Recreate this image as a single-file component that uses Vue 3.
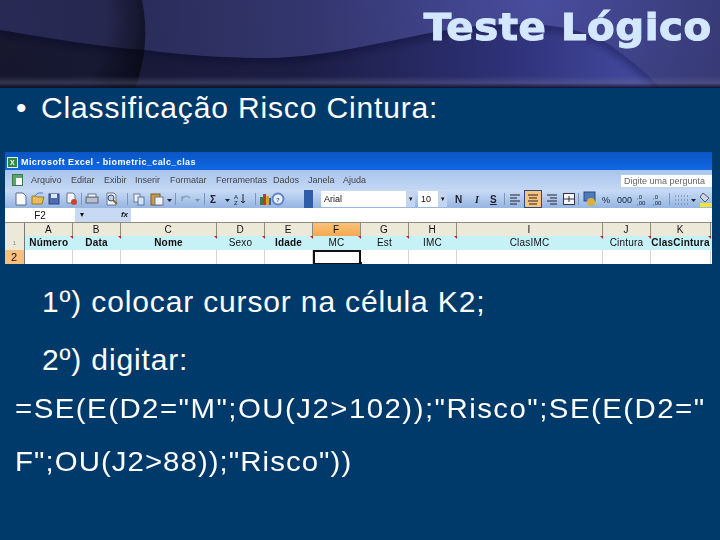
<script setup>
const menus = [['Arquivo',26],['Editar',66],['Exibir',99],['Inserir',130],['Formatar',165],['Ferramentas',211],['Dados',268],['Janela',303],['Ajuda',338]]
const columns = [
  { id: 'A', width: 47.5, label: 'Número' },
  { id: 'B', width: 48, label: 'Data' },
  { id: 'C', width: 96, label: 'Nome' },
  { id: 'D', width: 48, label: 'Sexo', light: true },
  { id: 'E', width: 48, label: 'Idade' },
  { id: 'F', width: 48, label: 'MC', active: true, light: true },
  { id: 'G', width: 48, label: 'Est', light: true },
  { id: 'H', width: 48, label: 'IMC', light: true },
  { id: 'I', width: 146, label: 'ClasIMC', light: true },
  { id: 'J', width: 48, label: 'Cintura', light: true },
  { id: 'K', width: 60, label: 'ClasCintura' }
]
const leftSeps = [76, 122, 170, 199, 250]
const rightSeps = [50, 124, 215]
</script>

<template>
  <div class="slide">
    <header class="banner">
      <svg class="banner-art" viewBox="0 0 720 88" preserveAspectRatio="none" aria-hidden="true">
        <defs>
          <radialGradient id="glow" cx="540" cy="0" r="440" gradientUnits="userSpaceOnUse">
            <stop offset="0" stop-color="#494d9e" />
            <stop offset="0.5" stop-color="#34376f" />
            <stop offset="1" stop-color="#282a55" />
          </radialGradient>
          <linearGradient id="lower" x1="0" y1="0" x2="720" y2="0" gradientUnits="userSpaceOnUse">
            <stop offset="0" stop-color="#17172f" />
            <stop offset="0.42" stop-color="#1b1d44" />
            <stop offset="0.7" stop-color="#2e3176" />
            <stop offset="0.88" stop-color="#42479c" />
          </linearGradient>
          <radialGradient id="ball" cx="0" cy="20" r="148" gradientUnits="userSpaceOnUse">
            <stop offset="0" stop-color="#000" stop-opacity="0" />
            <stop offset="0.72" stop-color="#000" stop-opacity="0.06" />
            <stop offset="1" stop-color="#05050c" stop-opacity="0.66" />
          </radialGradient>
          <linearGradient id="edge" x1="0" y1="0" x2="0" y2="1">
            <stop offset="0" stop-color="#777a98" stop-opacity="0" />
            <stop offset="0.55" stop-color="#777a98" stop-opacity="0.3" />
            <stop offset="0.8" stop-color="#20203a" stop-opacity="0.5" />
            <stop offset="1" stop-color="#0c0c1e" stop-opacity="0.9" />
          </linearGradient>
          <filter id="soft" x="-5%" y="-50%" width="110%" height="200%"><feGaussianBlur stdDeviation="4" /></filter>
          <clipPath id="lowerClip"><path d="M0 30 C60 40 110 48 145 50 C190 56 230 58 265 58 C340 58 420 30 480 26 C540 20 590 26 622 54 C640 68 652 78 662 90 L0 90 Z" /></clipPath>
        </defs>
        <rect width="720" height="88" fill="url(#glow)" />
        <path d="M0 30 C60 40 110 48 145 50 C190 56 230 58 265 58 C340 58 420 30 480 26 C540 20 590 26 622 54 C640 68 652 78 662 90 L0 90 Z" fill="url(#lower)" />
        <g clip-path="url(#lowerClip)">
          <path d="M0 30 C60 40 110 48 145 50 C190 56 230 58 265 58 C340 58 420 30 480 26 C540 20 590 26 622 54 C640 68 652 78 662 90" fill="none" stroke="#0c0c20" stroke-width="8" stroke-opacity="0.4" filter="url(#soft)" />
        </g>
        <path d="M0 0 H142 C148 28 146 60 135 88 H0 Z" fill="url(#ball)" />
        <rect y="76" width="720" height="12" fill="url(#edge)" />
      </svg>
      <h1 class="title">Teste Lógico</h1>
    </header>

    <main class="content">
      <p class="bullet"><span class="dot">•</span>Classificação Risco Cintura:</p>

      <section class="excel">
        <div class="titlebar">
          <span class="xl-logo">X</span>
          <span>Microsoft Excel - biometric_calc_clas</span>
        </div>
        <div class="menubar">
          <span class="xl-doc"></span>
          <span v-for="m in menus" :key="m[0]" class="menu" :style="{ left: m[1] + 'px' }">{{ m[0] }}</span>
          <span class="ask">Digite uma pergunta</span>
        </div>
        <div class="toolbar">
          <svg class="strip left" viewBox="0 0 299 18" aria-hidden="true">
            <g v-for="x in leftSeps" :key="x"><rect :x="x" y="3" width="1" height="12" fill="#7d95bb" /></g>
            <path d="M11 3h7l3 3v9H11z" fill="#fafcff" stroke="#5a6b8c" />
            <path d="M27 14V6h4l1 1h7l-2 7z" fill="#e9bd55" stroke="#9a7a2c" />
            <path d="M30 6l3-3h5" fill="none" stroke="#4d7fc4" />
            <rect x="44" y="4" width="10" height="10" fill="#4d6cae" stroke="#2e4378" />
            <rect x="46" y="4" width="6" height="4" fill="#dfe6f3" />
            <path d="M62 3h6l2 2v8H62z" fill="#f3f5fa" stroke="#6a7891" />
            <circle cx="69" cy="12" r="3" fill="#c8442e" />
            <rect x="81" y="7" width="12" height="6" fill="#b7bfcd" stroke="#5b6478" />
            <rect x="83" y="4" width="8" height="3" fill="#f3f5fa" stroke="#6a7891" />
            <path d="M102 3h7l2 2v10h-9z" fill="#f3f5fa" stroke="#6a7891" />
            <circle cx="106" cy="8" r="3" fill="#bcd0ea" stroke="#37496d" />
            <path d="M108 10l4 4" stroke="#8a6a2c" stroke-width="2" />
            <rect x="129" y="4" width="6" height="8" fill="#eef2f9" stroke="#6a7891" />
            <rect x="133" y="7" width="6" height="8" fill="#d7e3f3" stroke="#5776a8" />
            <rect x="146" y="4" width="9" height="11" fill="#c69a4a" stroke="#7c5e24" />
            <rect x="150" y="7" width="8" height="8" fill="#f2f4f9" stroke="#6a7891" />
            <path d="M162 9h5l-2.500 3z" fill="#223" />
            <path d="M177 11c0-5 5-6 8-3M177 11V6" fill="none" stroke="#8da0be" stroke-width="1.500" />
            <path d="M190 9h5l-2.500 3z" fill="#7d8ca6" />
            <text x="205" y="13" class="glyph bold">Σ</text>
            <path d="M220 9h5l-2.500 3z" fill="#223" />
            <text x="229" y="9" class="tiny">A</text><text x="229" y="15" class="tiny">Z</text>
            <path d="M238 4v9l-2-2M238 13l2-2" fill="none" stroke="#223" />
            <rect x="255" y="7" width="3" height="8" fill="#3f7a3c" />
            <rect x="258" y="4" width="3" height="11" fill="#c0392b" />
            <rect x="261" y="6" width="3" height="9" fill="#d6a32e" />
            <rect x="264" y="8" width="2" height="7" fill="#3b5fa8" />
            <circle cx="273" cy="9" r="5.500" fill="#eaf0f8" stroke="#5e86c9" stroke-width="2" />
            <text x="271" y="12" class="tiny bold blue">?</text>
          </svg>
          <span class="grip"></span>
          <div class="combos">
            <span class="combo font">Arial<em>▾</em></span>
            <span class="combo size">10<em>▾</em></span>
          </div>
          <svg class="strip right" viewBox="0 0 262 18" aria-hidden="true">
            <g v-for="x in rightSeps" :key="x"><rect :x="x + 4" y="3" width="1" height="12" fill="#7d95bb" /></g>
            <text x="5" y="13" class="glyph bold">N</text>
            <text x="25" y="13" class="glyph ital">I</text>
            <text x="40" y="13" class="glyph bold under">S</text>
            <path d="M60 5h10M60 8h7M60 11h10M60 14h7" stroke="#223" fill="none" />
            <rect x="74.500" y="0.500" width="17" height="17" fill="#fbc27a" stroke="#2a4a80" />
            <path d="M78 5h10M79 8h8M78 11h10M79 14h8" stroke="#223" fill="none" />
            <path d="M97 5h10M100 8h7M97 11h10M100 14h7" stroke="#223" fill="none" />
            <rect x="113.500" y="3.500" width="11" height="11" fill="#f6f8fc" stroke="#334" />
            <path d="M114 9h10M119 6v6" stroke="#334" />
            <rect x="134" y="2" width="11" height="9" fill="#4d7bb8" stroke="#2a4a80" />
            <circle cx="141" cy="12" r="4" fill="#d9b23e" />
            <text x="152" y="13" class="tiny big">%</text>
            <text x="167" y="13" class="tiny big">000</text>
            <text x="187" y="9" class="tiny">,0</text><text x="187" y="15" class="tiny">,00</text>
            <text x="203" y="9" class="tiny">,0</text><text x="203" y="15" class="tiny">,00</text>
            <path d="M225 6h14M225 10h14M225 14h14" stroke="#61708c" stroke-dasharray="1 2" fill="none" />
            <path d="M241 9h5l-2.500 3z" fill="#223" />
            <path d="M253 3l6 5-4 4-5-5z" fill="#cfd6e2" stroke="#4f5b70" />
            <rect x="250" y="13" width="12" height="4" fill="#f2e23c" />
          </svg>
        </div>
        <div class="formula">
          <span class="cellname">F2</span>
          <span class="fxbar"><i>▾</i><b>fx</b></span>
        </div>
        <div class="grid">
          <div class="row heads">
            <span class="corner"></span>
            <span v-for="c in columns" :key="c.id" class="head" :class="{ sel: c.active }" :style="{ width: c.width + 'px' }">{{ c.id }}</span>
          </div>
          <div class="row labels">
            <span class="rownum plain">1</span>
            <span v-for="c in columns" :key="c.id" class="label" :class="{ light: c.light }" :style="{ width: c.width + 'px' }">{{ c.label }}</span>
          </div>
          <div class="row cells">
            <span class="rownum sel">2</span>
            <span v-for="c in columns" :key="c.id" class="cell" :class="{ active: c.active }" :style="{ width: c.width + 'px' }"></span>
          </div>
        </div>
      </section>

      <p class="line indent first">1º) colocar cursor na célula K2;</p>
      <p class="line indent second">2º) digitar:</p>
      <p class="line formula-text wide-row"><span class="stretch wide">=SE(E(D2="M";OU(J2&gt;102));"Risco";SE(E(D2="</span></p>
      <p class="line formula-text"><span class="stretch">F";OU(J2&gt;88));"Risco"))</span></p>
    </main>
  </div>
</template>

<style>
html, body { margin: 0; background: #003a6a; }
</style>

<style scoped>
.slide { width: 720px; height: 540px; overflow: hidden; background: #003a6a; color: #fff; font-family: "Liberation Sans", Arial, sans-serif; }
.banner { position: relative; height: 88px; display: flex; justify-content: flex-end; }
.banner-art { position: absolute; inset: 0; width: 720px; height: 88px; }
.title { position: relative; margin: 4px 8px 0 0; font-family: "DejaVu Sans", sans-serif; font-size: 38px; line-height: 47px; font-weight: 700; color: #d3e8ff; -webkit-text-stroke: 1.1px #d3e8ff; letter-spacing: 0.5px; white-space: nowrap; transform: scaleX(1.06); transform-origin: right center; }
.content { display: flow-root; }
.bullet { margin: 2px 0 0 16px; font-size: 30px; line-height: 36px; display: flex; white-space: nowrap; letter-spacing: 0.85px; }
.dot { width: 25px; }
.stretch { display: inline-block; transform: scaleX(1.05); transform-origin: left center; letter-spacing: 1px; }
.wide { letter-spacing: 1.4px; }
.excel { margin: 26px 0 0 5px; width: 707px; height: 112px; background: #fff; color: #111; font-size: 9px; display: flex; flex-direction: column; overflow: hidden; filter: blur(0.3px); }
.titlebar { height: 18px; flex: none; padding: 2px 0 0 2px; box-sizing: border-box; background: linear-gradient(#0a55c4, #0f68e4); color: #fff; font-weight: 700; display: flex; align-items: center; gap: 3px; letter-spacing: 0.4px; }
.xl-logo { width: 11px; height: 11px; background: #2c8a44; border: 1px solid #e8f1e8; box-sizing: border-box; font-size: 7px; line-height: 9px; text-align: center; }
.menubar { height: 20px; flex: none; position: relative; background: linear-gradient(#a9c4ec, #c4d8f5); }
.xl-doc { position: absolute; left: 7px; top: 4px; width: 11px; height: 12px; background: #fff; border: 1px solid #3c7a4c; box-sizing: border-box; box-shadow: inset 3px 3px 0 #5aa36b; }
.menu { position: absolute; top: 5px; line-height: 11px; color: #444; }
.ask { position: absolute; right: 0; top: 5px; width: 91px; height: 12px; background: #fff; color: #666; line-height: 12px; padding-left: 3px; box-sizing: border-box; }
.toolbar { height: 18px; flex: none; display: flex; align-items: center; background: linear-gradient(#c9dcf6, #98b6e2 95%); }
.strip { display: block; flex: none; height: 18px; }
.strip.left { width: 299px; }
.strip.right { width: 262px; }
.glyph { font-size: 10px; fill: #223; font-family: "Liberation Sans", sans-serif; }
.tiny { font-size: 6px; fill: #123; font-family: "Liberation Sans", sans-serif; }
.big { font-size: 9px; }
.bold { font-weight: 700; }
.blue { fill: #2f5da8; }
.ital { font-style: italic; font-family: "Liberation Serif", serif; font-weight: 700; }
.under { text-decoration: underline; }
.grip { width: 9px; height: 18px; background: #2f5da8; margin-right: 8px; flex: none; }
.combos { display: flex; gap: 3px; flex: none; width: 129px; }
.combo { height: 16px; background: #fff; line-height: 16px; padding-left: 3px; box-sizing: border-box; position: relative; display: block; }
.combo em { position: absolute; right: 0; top: 0; width: 9px; height: 16px; background: #c3d5ef; font-style: normal; font-size: 7px; text-align: center; }
.font { width: 94px; }
.size { width: 29px; }
.formula { height: 14px; flex: none; display: flex; align-items: center; background: #fff; }
.cellname { width: 70px; text-align: center; font-size: 10px; }
.fxbar { width: 56px; height: 14px; background: #c8daf3; display: flex; justify-content: space-between; padding: 0 3px 0 5px; box-sizing: border-box; line-height: 14px; font-size: 8px; }
.fxbar i { font-style: normal; }
.fxbar b { font-style: italic; }
.grid { flex: 1; font-size: 10px; }
.row { display: flex; }
.row > span { box-sizing: border-box; flex: none; text-align: center; }
.corner { width: 20px; background: #ece9d8; border-right: 1px solid #777; }
.heads { height: 13px; line-height: 13px; background: #ece9d8; border-top: 1px solid #8c8c80; }
.head { background: #ece9d8; border-right: 1px solid #8c8c80; }
.head.sel { background: linear-gradient(#fbc27c, #f6a94f); }
.labels { height: 14px; line-height: 14px; background: #c6f1f7; }
.rownum { width: 20px; background: #ece9d8; border-right: 1px solid #777; }
.rownum.plain { color: #8a8a80; font-size: 6px; }
.label { font-weight: 700; position: relative; letter-spacing: 0.2px; }
.label.light { font-weight: 400; }
.label::after { content: ""; position: absolute; right: 0; top: 0; border-top: 3px solid #c02026; border-left: 3px solid transparent; }
.cells { height: 15px; background: #fff; border-bottom: 1px solid #8a9cb8; box-sizing: border-box; }
.rownum.sel { background: #f8bf7f; font-size: 11px; line-height: 15px; text-align: left; padding-left: 6px; }
.cell { border-right: 1px solid #d4d4d4; height: 15px; position: relative; }
.cell.active { border: 2px solid #111; }
.cell.active::after { content: ""; position: absolute; right: -3px; bottom: -2px; width: 3px; height: 3px; background: #111; }
.line { margin: 0; font-size: 30px; line-height: 39px; white-space: nowrap; letter-spacing: 0.85px; }
.indent { padding-left: 42px; }
.first { margin-top: 18px; }
.second { margin-top: 19px; }
.formula-text { margin-top: 5px; padding-left: 15px; line-height: 48px; font-size: 28px; }
.wide-row { margin-top: 6px; }
</style>
